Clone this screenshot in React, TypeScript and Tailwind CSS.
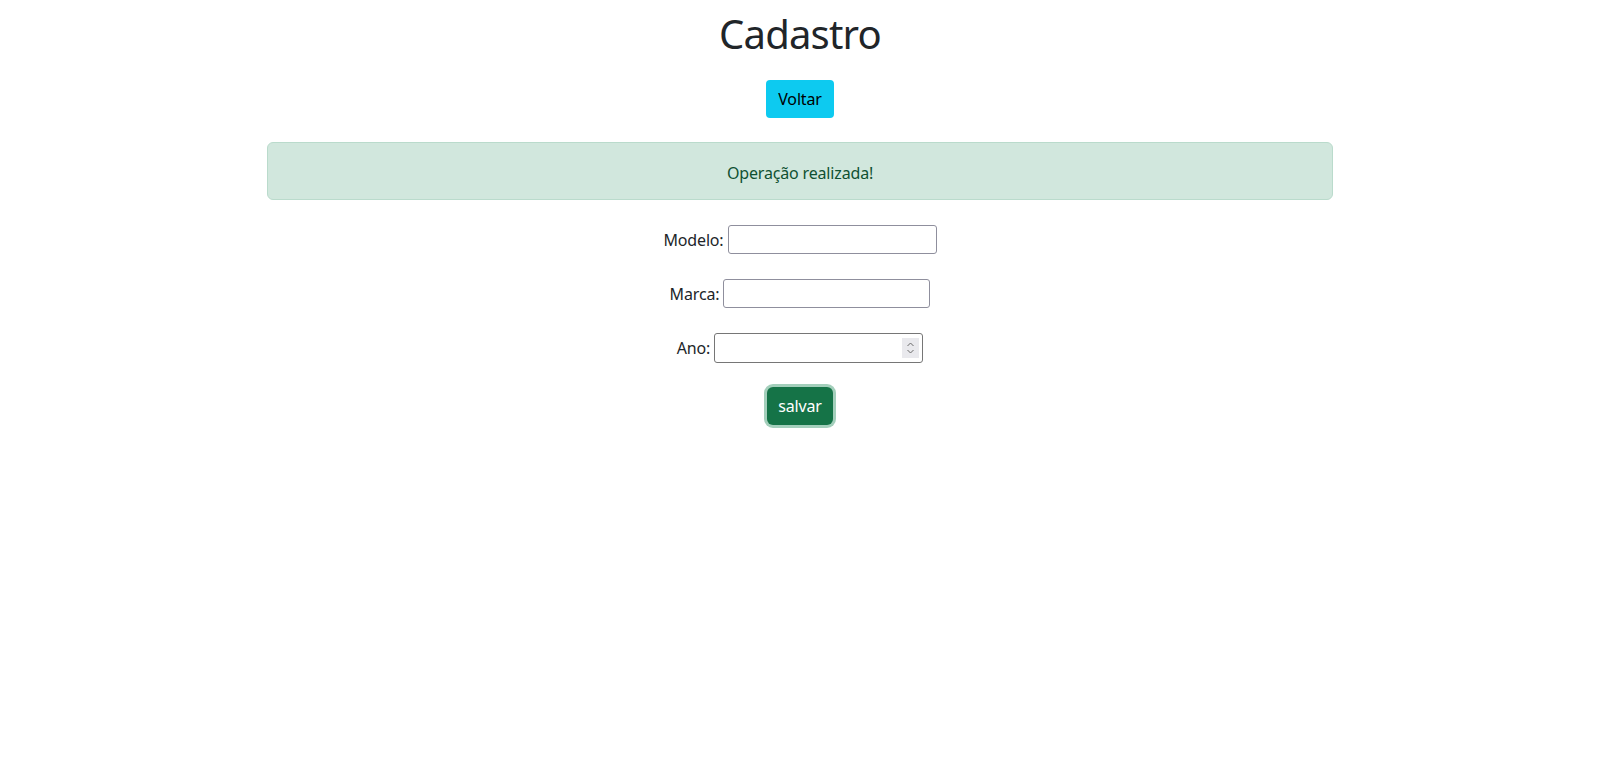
export default function App() {
  return (
    <div className="min-h-screen bg-white text-[#212529] font-['Noto_Sans',sans-serif] text-base tracking-[-0.01em]">
      <div className="flex flex-col items-center pt-[10px]">
        <h1 className="text-[40px] leading-[48px] font-normal tracking-[-0.02em]">Cadastro</h1>
        <button className="mt-[22px] h-[38px] w-[68px] rounded-[4px] bg-[#0dcaf0] text-black leading-[24px]">
          Voltar
        </button>
        <div className="mt-[24px] w-[1066px] h-[58px] flex items-center justify-center pt-[3px] rounded-[6px] border border-[#badbcc] bg-[#d1e7dd] text-[#0f5132]">
          Operação realizada!
        </div>
        <form className="mt-[25px] flex flex-col items-center gap-[25px]">
          <div className="flex items-center gap-[4px]">
            <label>Modelo:</label>
            <input type="text" className="w-[209px] h-[29px] rounded-[3px] border border-[#8f8f9d] px-1" />
          </div>
          <div className="flex items-center gap-[4px]">
            <label>Marca:</label>
            <input type="text" className="w-[207px] h-[29px] rounded-[3px] border border-[#8f8f9d] px-1" />
          </div>
          <div className="flex items-center gap-[4px]">
            <label>Ano:</label>
            <div className="relative w-[209px] h-[30px] rounded-[3px] border border-[#767676]">
              <span className="absolute right-[3px] top-[4px] w-[17px] h-[20px] bg-[#e9e9ed] flex flex-col items-center justify-center">
                <svg width="9" height="14" viewBox="0 0 9 14" fill="none" stroke="#6b6b6b" strokeWidth="1">
                  <path d="M1.5 5 L4.5 2 L7.5 5" />
                  <path d="M1.5 9 L4.5 12 L7.5 9" />
                </svg>
              </span>
            </div>
          </div>
          <button type="button" className="h-[38px] w-[66px] rounded-[6px] bg-[#157347] text-white leading-[24px] ring-[3px] ring-[#a3cfbb] -mt-[1px]">
            salvar
          </button>
        </form>
      </div>
    </div>
  );
}
